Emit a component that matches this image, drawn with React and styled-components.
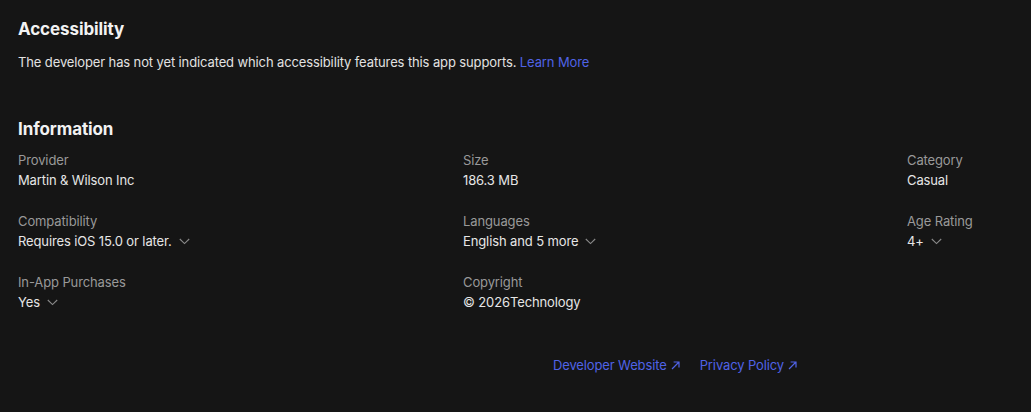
import React from 'react';
import styled, { createGlobalStyle } from 'styled-components';

const GlobalStyle = createGlobalStyle`
  html, body {
    margin: 0;
    padding: 0;
    background: #151515;
    overflow: hidden;
  }
  body {
    font-family: Inter, "Noto Sans", sans-serif;
    -webkit-font-smoothing: antialiased;
  }
`;

const Page = styled.div`
  width: 1314px;
  padding: 18px 18px 0;
  color: #e6e6e6;
  letter-spacing: -0.12px;
`;

const Section = styled.section`
  margin-bottom: ${(props) => props.mb || '0'};
`;

const Title = styled.h2`
  margin: 0 0 ${(props) => props.gap || '13px'};
  font-size: 17px;
  line-height: 22px;
  font-weight: 700;
  color: #f2f2f2;
  letter-spacing: -0.1px;
`;

const Text = styled.p`
  margin: 0;
  font-size: 13px;
  line-height: 18px;
  color: #e2e2e2;
`;

const Link = styled.a`
  color: #5063e6;
  text-decoration: none;
  font-size: 13px;
  display: inline-flex;
  align-items: center;
  gap: 4px;
`;

const InfoGrid = styled.div`
  display: grid;
  grid-template-columns: 425px 424px 1fr;
  column-gap: 20px;
  row-gap: 23px;
`;

const Item = styled.div`
  display: flex;
  flex-direction: column;
  gap: 2px;
`;

const Label = styled.div`
  font-size: 13px;
  line-height: 18px;
  color: #999999;
`;

const Value = styled.div`
  font-size: 13px;
  line-height: 18px;
  color: #e6e6e6;
  display: flex;
  align-items: center;
  gap: 7px;
`;

const Links = styled.div`
  display: flex;
  justify-content: center;
  gap: 20px;
  margin-top: 46px;
`;

const Chevron = () => (
  <svg width="11" height="7" viewBox="0 0 11 7" fill="none">
    <path d="M0.8 1 L5.5 5.6 L10.2 1" stroke="#8a8a8a" strokeWidth="1.1" />
  </svg>
);

const Arrow = () => (
  <svg width="9" height="9" viewBox="0 0 9 9" fill="none">
    <path d="M1 8 L8 1 M2.6 1 H8 V6.4" stroke="#5063e6" strokeWidth="1.2" />
  </svg>
);

const info = [
  { label: 'Provider', value: 'Martin & Wilson Inc' },
  { label: 'Size', value: '186.3 MB' },
  { label: 'Category', value: 'Casual' },
  { label: 'Compatibility', value: 'Requires iOS 15.0 or later.', more: true },
  { label: 'Languages', value: 'English and 5 more', more: true },
  { label: 'Age Rating', value: '4+', more: true },
  { label: 'In-App Purchases', value: 'Yes', more: true },
  { label: 'Copyright', value: '© 2026Technology' },
];

const App = () => {
  return (
    <Page>
      <GlobalStyle />
      <Section mb="47px">
        <Title>Accessibility</Title>
        <Text>
          The developer has not yet indicated which accessibility features this
          app supports. <Link href="#">Learn More</Link>
        </Text>
      </Section>
      <Section>
        <Title gap="11px">Information</Title>
        <InfoGrid>
          {info.map((item) => (
            <Item key={item.label}>
              <Label>{item.label}</Label>
              <Value>
                {item.value}
                {item.more && <Chevron />}
              </Value>
            </Item>
          ))}
        </InfoGrid>
        <Links>
          <Link href="#">
            Developer Website <Arrow />
          </Link>
          <Link href="#">
            Privacy Policy <Arrow />
          </Link>
        </Links>
      </Section>
    </Page>
  );
};

export default App;
